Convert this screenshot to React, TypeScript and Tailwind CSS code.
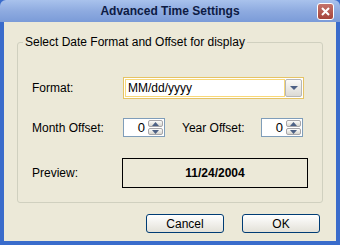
import React from 'react';

const font = { fontFamily: '"Liberation Sans", Arial, sans-serif' };

function Spinner() {
  return (
    <div className="flex h-[19px] w-[42px] border border-[#7f9db9] bg-white">
      <div className="flex flex-1 items-center justify-end pr-[3px] text-[13px] text-black">0</div>
      <div className="flex w-[16px] flex-col gap-px py-px pr-px">
        <div className="flex flex-1 items-center justify-center rounded-[2px] border border-[#a7a6aa] bg-gradient-to-b from-[#fdfdfc] to-[#d8d6ce]">
          <svg width="7" height="4" viewBox="0 0 7 4"><path d="M0 4 L3.5 0 L7 4 Z" fill="#4d6185" /></svg>
        </div>
        <div className="flex flex-1 items-center justify-center rounded-[2px] border border-[#a7a6aa] bg-gradient-to-b from-[#fdfdfc] to-[#d8d6ce]">
          <svg width="7" height="4" viewBox="0 0 7 4"><path d="M0 0 L3.5 4 L7 0 Z" fill="#4d6185" /></svg>
        </div>
      </div>
    </div>
  );
}

export default function App() {
  return (
    <div style={font} className="flex h-[245px] w-[340px] flex-col bg-[#3a6ccb]">
      {/* Title bar */}
      <div className="relative flex h-[22px] items-center justify-center rounded-t-[6px] bg-gradient-to-b from-[#a9c2ec] via-[#8eabe0] to-[#7b9bd8]">
        <span className="text-[12px] font-bold text-[#0d1b44]">Advanced Time Settings</span>
        <div className="absolute right-[6px] top-[3px] flex h-[17px] w-[17px] items-center justify-center rounded-[3px] border border-white bg-gradient-to-b from-[#c4736c] to-[#a5433a]">
          <svg width="9" height="9" viewBox="0 0 9 9"><path d="M1 1 L8 8 M8 1 L1 8" stroke="white" strokeWidth="2" /></svg>
        </div>
      </div>
      {/* Body */}
      <div className="mx-[4px] mb-[4px] flex flex-1 flex-col bg-[#ece9d8] px-[13px] pt-[20px] text-[12px]">
        <div className="relative h-[161px] rounded-[3px] border border-[#d0d0bf] px-[14px] pt-[34px]">
          <span className="absolute left-[5px] top-[-9px] bg-[#ece9d8] px-[2px] leading-[16px] text-black">
            Select Date Format and Offset for display
          </span>
          <div className="flex items-center">
            <span className="w-[91px] text-black">Format:</span>
            <div className="flex h-[22px] w-[181px] items-center border border-[#e5c365] bg-white p-px">
              <div className="flex h-full flex-1 items-center border border-[#f8d878] pl-[2px] text-black">MM/dd/yyyy</div>
              <div className="flex h-full w-[17px] items-center justify-center rounded-[2px] border border-[#b6b6b6] bg-gradient-to-b from-[#fafaf8] to-[#dcdad4]">
                <svg width="8" height="4" viewBox="0 0 8 4"><path d="M0 0 L4 4 L8 0 Z" fill="#4d6185" /></svg>
              </div>
            </div>
          </div>
          <div className="mt-[19px] flex items-center">
            <span className="w-[91px] text-black">Month Offset:</span>
            <Spinner />
            <span className="ml-[17px] w-[79px] text-black">Year Offset:</span>
            <Spinner />
          </div>
          <div className="mt-[21px] flex items-center">
            <span className="w-[90px] text-black">Preview:</span>
            <div className="flex h-[30px] w-[186px] items-center justify-center border border-black font-bold text-black">
              11/24/2004
            </div>
          </div>
        </div>
        <div className="mt-[11px] flex justify-end gap-[18px] pr-[3px]">
          <button className="h-[19px] w-[78px] rounded-[3px] border border-[#003c74] bg-gradient-to-b from-white to-[#e3e1d8] text-black">Cancel</button>
          <button className="h-[19px] w-[78px] rounded-[3px] border border-[#003c74] bg-gradient-to-b from-white to-[#e3e1d8] text-black">OK</button>
        </div>
      </div>
    </div>
  );
}
